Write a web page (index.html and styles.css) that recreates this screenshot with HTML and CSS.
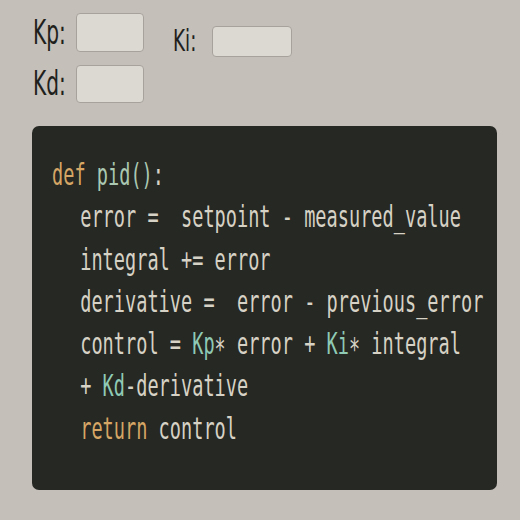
FILE: index.html
```html
<!DOCTYPE html>
<html>
<head>
<meta charset="utf-8">
<link rel="stylesheet" href="styles.css">
</head>
<body>
<div class="params">
  <div class="row">
    <div class="field kp">
      <span class="label"><span class="txt">Kp:</span></span>
      <div class="box"></div>
    </div>
    <div class="field ki">
      <span class="label"><span class="txt">Ki:</span></span>
      <div class="box"></div>
    </div>
  </div>
  <div class="row">
    <div class="field kd">
      <span class="label"><span class="txt">Kd:</span></span>
      <div class="box"></div>
    </div>
  </div>
</div>
<div class="panel">
  <div class="code">
    <div class="ln"><span class="kw">def</span> <span class="fn">pid()</span>:</div>
    <div class="ln in">error =  setpoint - measured_value</div>
    <div class="ln in">integral += error</div>
    <div class="ln in">derivative =  error - previous_error</div>
    <div class="ln in">control = <span class="k">Kp</span>∗ error + <span class="k">Ki</span>∗ integral</div>
    <div class="ln in">+ <span class="k">Kd</span>-derivative</div>
    <div class="ln in"><span class="kw">return</span> control</div>
  </div>
</div>
</body>
</html>
```

FILE: styles.css
```css
html, body {
  margin: 0;
  padding: 0;
}
body {
  background: #c4bfb8;
  width: 520px;
  height: 520px;
  overflow: hidden;
  font-family: "DejaVu Sans Condensed", "DejaVu Sans", sans-serif;
}
.params {
  padding: 13px 0 0 33px;
  height: 126px;
  box-sizing: border-box;
}
.row {
  display: flex;
  align-items: flex-start;
}
.field {
  display: flex;
  align-items: center;
}
.label {
  display: inline-block;
  width: 43px;
  height: 32px;
  line-height: 32px;
  color: #1f1f1d;
  white-space: nowrap;
}
.label .txt {
  display: inline-block;
  font-size: 33px;
  transform: scaleX(0.68);
  transform-origin: left center;
}
.box {
  background: #dcd8d2;
  border: 1px solid #a7a39c;
  border-radius: 4px;
  box-sizing: border-box;
}
.kp .box { width: 68px; height: 39px; }
.ki { margin: 12px 0 0 29px; }
.ki .label { width: 39px; }
.ki .label .txt { font-size: 30px; }
.ki .box { width: 80px; height: 31px; }
.kd { margin-top: 8px; }
.kd .box { width: 68px; height: 38px; }

.panel {
  margin-left: 32px;
  width: 465px;
  height: 364px;
  background: #262823;
  border-radius: 7px;
  box-sizing: border-box;
  padding: 27px 0 0 20px;
  overflow: hidden;
}
.code {
  font-family: "DejaVu Sans Mono", monospace;
  font-size: 31px;
  line-height: 42.3px;
  color: #d6d2c5;
  transform: scaleX(0.6);
  transform-origin: left top;
}
.ln { white-space: pre; }
.ln.in { padding-left: 47px; }
.kw { color: #d5a665; }
.fn { color: #aac8b2; }
.k { color: #8fcab5; }
```
